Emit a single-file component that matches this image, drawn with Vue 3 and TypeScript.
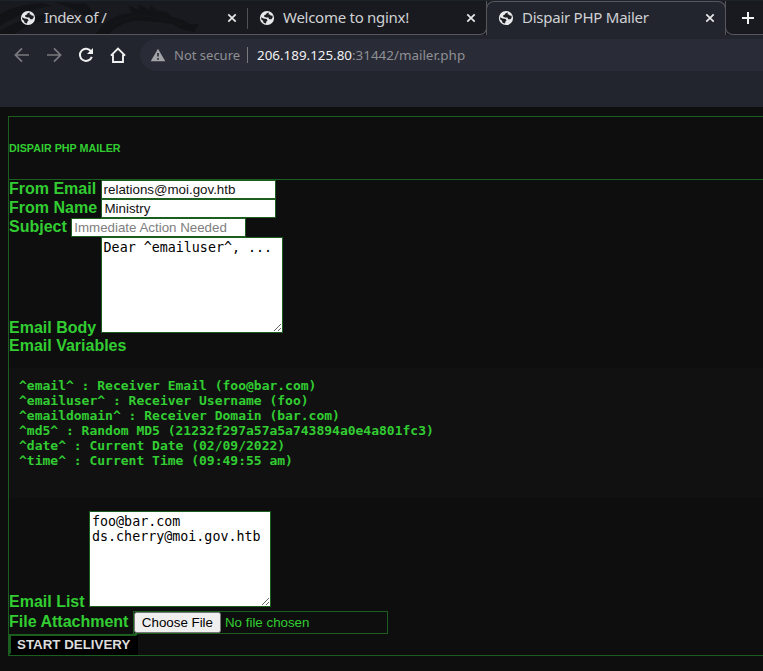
<script setup lang="ts">
import { ref } from 'vue'

interface Tab {
  title: string
  kind: string
}

const tabs: Tab[] = [
  { title: 'Index of /', kind: 'first' },
  { title: 'Welcome to nginx!', kind: 'second' },
  { title: 'Dispair PHP Mailer', kind: 'active' },
]

const fromEmail = ref('relations@moi.gov.htb')
const fromName = ref('Ministry')
const subject = ref('')
const body = ref('Dear ^emailuser^, ...')
const list = ref('foo@bar.com\nds.cherry@moi.gov.htb')

const variables: string = [
  '^email^ : Receiver Email (foo@bar.com)',
  '^emailuser^ : Receiver Username (foo)',
  '^emaildomain^ : Receiver Domain (bar.com)',
  '^md5^ : Random MD5 (21232f297a57a5a743894a0e4a801fc3)',
  '^date^ : Current Date (02/09/2022)',
  '^time^ : Current Time (09:49:55 am)',
].join('\n')
</script>

<template>
  <div class="window">
    <header class="chrome">
      <div class="tabstrip">
        <svg class="dragon" width="260" height="33" viewBox="0 0 260 33">
          <path d="M0 13C12 6 25 3 42 2L52 5C35 7 15 15 0 25ZM0 30C16 20 34 14 52 13L60 17C40 18 24 25 15 33H0ZM55 1L83 3L102 20L96 23L78 10ZM85 2L96 13L90 15L79 3Z" />
          <path d="M96 33C101 24 110 17 122 13L132 12L128 4L139 9L138 3L150 9L150 4L158 10L167 11L172 16L183 19L190 23L199 23L194 31L181 28L172 23L158 21L145 20C129 18 116 25 109 33Z" />
          <path class="scale" d="M106 29C116 20 130 14 145 15L158 17L172 20L182 24" />
        </svg>
        <div v-for="tab in tabs" :key="tab.title" class="tab" :class="tab.kind">
          <svg class="globe" width="16" height="16" viewBox="0 0 16 16">
            <circle cx="8" cy="8" r="7.1" fill="#e8e9eb" />
            <path d="M9.8 2.4L7.6 3.2L7 4.6L5.2 5.2V6.8L7.2 7.6H9.4L10.2 9.2H12.4L13.6 7.8V5.8L11.6 5.6L11 4.4H9.6ZM2.1 7.2L4.6 8.4L7.6 9L8.6 10.4L7.4 11.6L7 13.6L4.6 12.8L4 10.8L2.3 9.6Z" fill="#1d1e23" />
          </svg>
          <span class="title">{{ tab.title }}</span>
          <svg class="close" width="10" height="10" viewBox="0 0 10 10">
            <path d="M1.3 1.3L8.7 8.7M8.7 1.3L1.3 8.7" stroke="#e7e8ea" stroke-width="1.7" />
          </svg>
        </div>
        <div class="newtab">
          <svg width="14" height="14" viewBox="0 0 14 14"><path d="M7 1V13M1 7H13" stroke="#f2f2f3" stroke-width="2" /></svg>
        </div>
      </div>
      <div class="toolbar">
        <svg class="nav" width="16" height="16" viewBox="0 0 16 16"><path d="M15 8H2M8 1.3L1.4 8L8 14.7" fill="none" stroke="#797a7f" stroke-width="1.7" /></svg>
        <svg class="nav" width="16" height="16" viewBox="0 0 16 16"><path d="M1 8H14M8 1.3L14.6 8L8 14.7" fill="none" stroke="#797a7f" stroke-width="1.7" /></svg>
        <svg class="nav" width="16" height="16" viewBox="0 0 16 16"><path d="M13.1 4.4A6.1 6.1 0 1 0 13.8 9.8" fill="none" stroke="#f0f0f0" stroke-width="2" /><path d="M15 1V7H9Z" fill="#f0f0f0" /></svg>
        <svg class="nav" width="16" height="16" viewBox="0 0 16 16"><path d="M.9 8.6L8 1.5L15.1 8.6M3 7.5V15H13V7.5" fill="none" stroke="#f0f0f0" stroke-width="1.9" /></svg>
        <div class="address">
          <svg class="warning" width="16" height="14" viewBox="0 0 16 14"><path d="M8 .8L15.3 13.2H.7Z" fill="#a2a3a7" /><path d="M8 5V8.6M8 10V11.7" stroke="#292b36" stroke-width="1.6" /></svg>
          <span class="security">Not secure</span>
          <span class="divider"></span>
          <span class="url"><b>206.189.125.80</b>:31442/mailer.php</span>
        </div>
      </div>
    </header>

    <main class="page">
      <form class="mailer" @submit.prevent>
        <h1>DISPAIR PHP MAILER</h1>
        <div class="row"><label for="email">From Email</label><input id="email" v-model="fromEmail" class="field"></div>
        <div class="row"><label for="name">From Name</label><input id="name" v-model="fromName" class="field name"></div>
        <div class="row"><label for="subject">Subject</label><input id="subject" v-model="subject" class="field" placeholder="Immediate Action Needed"></div>
        <div class="row tall"><label for="body">Email Body</label><textarea id="body" v-model="body"></textarea></div>
        <div class="variables-title">Email Variables</div>
        <pre>{{ variables }}</pre>
        <div class="row tall"><label for="list">Email List</label><textarea id="list" v-model="list"></textarea></div>
        <div class="row attachment"><label for="file">File Attachment</label><input id="file" type="file"></div>
        <button class="start">START DELIVERY</button>
      </form>
    </main>
  </div>
</template>

<style>
body {
  background: #0e0e0e;
  overflow: hidden;
}
</style>

<style scoped>
* {
  box-sizing: border-box;
}
.window {
  width: 763px;
  height: 671px;
  overflow: hidden;
  background: #0e0e0e;
}
.chrome {
  height: 107px;
  background: #23252e;
  font-family: "Noto Sans", sans-serif;
}
.tabstrip {
  position: relative;
  display: flex;
  height: 35px;
  background: #191a1f;
  border-top: 1px solid #1d232b;
}
.dragon {
  position: absolute;
  left: 0;
  top: 0;
  fill: #121317;
}
.scale {
  fill: none;
  stroke: #16171b;
  stroke-width: 1;
}
.tab {
  position: relative;
  display: flex;
  align-items: center;
  height: 34px;
  border-bottom: 1px solid #56575c;
  color: #d0d1d4;
  font-size: 15px;
  line-height: 31px;
}
.tab.first {
  width: 248px;
  padding: 0 11px 0 20px;
  letter-spacing: -0.5px;
}
.tab.first::after {
  content: "";
  position: absolute;
  right: 0;
  top: 7px;
  width: 1px;
  height: 21px;
  background: #505157;
}
.tab.second {
  width: 239px;
  padding: 0 10px 0 11px;
  border-right: 1px solid #56575c;
  border-bottom-right-radius: 7px;
  letter-spacing: -0.27px;
}
.tab.active {
  width: 240px;
  margin-left: -1px;
  padding: 0 10px 1px 11px;
  background: #23252e;
  border: 1px solid #56575c;
  border-bottom: 0;
  border-radius: 8px 8px 0 0;
  letter-spacing: -0.25px;
}
.globe {
  flex: none;
  margin-right: 8px;
}
.title {
  flex: 1;
  height: 32px;
  white-space: nowrap;
}
.active .title {
  line-height: 30px;
}
.close {
  flex: none;
}
.newtab {
  flex: 1;
  display: flex;
  align-items: center;
  height: 34px;
  margin-left: -1px;
  padding-left: 15px;
  border-left: 1px solid #56575c;
  border-bottom: 1px solid #56575c;
  border-bottom-left-radius: 8px;
}
.toolbar {
  display: flex;
  align-items: center;
  height: 40px;
  padding-left: 14px;
}
.nav {
  flex: none;
  margin-right: 16px;
}
.address {
  flex: 1;
  display: flex;
  align-items: center;
  height: 32px;
  margin-left: -2px;
  padding-left: 10px;
  border-radius: 16px 0 0 16px;
  background: #292b36;
  color: #8f9095;
  font-size: 13px;
}
.warning {
  margin-right: 8px;
}
.security {
  width: 66px;
  white-space: nowrap;
}
.divider {
  width: 1px;
  height: 16px;
  margin: 0 9px 0 7px;
  background: #77797f;
}
.url {
  font-size: 13.4px;
}
.url b {
  color: #f1f1f3;
  font-weight: 400;
}
.page {
  padding: 9px 0 0 8px;
  font-family: "Liberation Sans", Arial, sans-serif;
}
.mailer {
  width: 770px;
  height: 540px;
  border: 1px solid #1b5e20;
  color: #32cd32;
  font-size: 16px;
  font-weight: 700;
}
h1 {
  height: 63px;
  margin: 0;
  border-bottom: 1px solid #1b5e20;
  font-size: 10.72px;
  line-height: 62px;
}
.row {
  display: flex;
  height: 19px;
}
label {
  margin-right: 4.45px;
  line-height: 18px;
  white-space: nowrap;
}
.field {
  width: 175px;
  height: 19px;
  padding: 1px 2px;
  border: 1px solid #1b5e20;
  outline: 0;
  background: #fff;
  color: #111;
  font: 13.333px "Liberation Sans", Arial, sans-serif;
}
.field::placeholder {
  color: #808080;
}
.row.tall {
  height: 100px;
}
.tall label {
  align-self: flex-end;
}
textarea {
  width: 182px;
  height: 96px;
  padding: 2px;
  border: 1px solid #1b5e20;
  outline: 0;
  overflow: auto;
  resize: both;
  background: #fff;
  color: #000;
  font: 13.333px/15px "DejaVu Sans Mono", monospace;
}
.variables-title {
  height: 31px;
  line-height: 18px;
}
pre {
  height: 130px;
  margin: 0 0 13px;
  padding: 10px;
  background: #111;
  font: 700 13px/15px "DejaVu Sans Mono", monospace;
}
.attachment {
  height: 23px;
}
.attachment label {
  line-height: 22px;
}
#file {
  width: 255px;
  height: 23px;
  border: 1px solid #1b5e20;
  font: 13.333px "Liberation Sans", Arial, sans-serif;
}
.start {
  display: block;
  width: 129px;
  height: 21px;
  padding: 0 7px 0 6px;
  border: 2px outset #1b5e20;
  border-right-color: #000;
  border-bottom-color: #000;
  background: #000;
  color: #ddd;
  font: 700 13.333px "Liberation Sans", Arial, sans-serif;
  white-space: nowrap;
}
</style>
